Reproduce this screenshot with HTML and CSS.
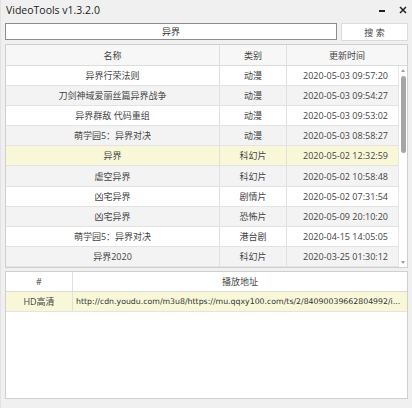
FILE: index.html
```html
<!DOCTYPE html>
<html>
<head>
<meta charset="utf-8">
<link rel="stylesheet" href="styles.css">
</head>
<body>
<div class="window">
  <div class="titlebar">
    <span class="title">VideoTools v1.3.2.0</span>
    <div class="controls">
      <span class="min"></span>
      <svg class="close" width="8" height="8" viewBox="0 0 8 8"><path d="M1 1L7 7M7 1L1 7" stroke="#222" stroke-width="1.5"/></svg>
    </div>
  </div>
  <div class="content">
    <div class="search">
      <div class="input">异界</div>
      <div class="btn">搜 索</div>
    </div>
    <div class="grid top">
      <div class="head">
        <div class="c">名称</div>
        <div class="c">类别</div>
        <div class="c last">更新时间</div>
      </div>
      <div class="body">
        <div class="rows">
          <div class="row"><div class="c">异界行荣法则</div><div class="c">动漫</div><div class="c">2020-05-03 09:57:20</div></div>
          <div class="row alt"><div class="c">刀剑神域爱丽丝篇异界战争</div><div class="c">动漫</div><div class="c">2020-05-03 09:54:27</div></div>
          <div class="row"><div class="c">异界群敌 代码重组</div><div class="c">动漫</div><div class="c">2020-05-03 09:53:02</div></div>
          <div class="row alt"><div class="c">萌学园5：异界对决</div><div class="c">动漫</div><div class="c">2020-05-03 08:58:27</div></div>
          <div class="row sel"><div class="c">异界</div><div class="c">科幻片</div><div class="c">2020-05-02 12:32:59</div></div>
          <div class="row alt"><div class="c">虐空异界</div><div class="c">科幻片</div><div class="c">2020-05-02 10:58:48</div></div>
          <div class="row"><div class="c">凶宅异界</div><div class="c">剧情片</div><div class="c">2020-05-02 07:31:54</div></div>
          <div class="row alt"><div class="c">凶宅异界</div><div class="c">恐怖片</div><div class="c">2020-05-09 20:10:20</div></div>
          <div class="row"><div class="c">萌学园5：异界对决</div><div class="c">港台剧</div><div class="c">2020-04-15 14:05:05</div></div>
          <div class="row alt"><div class="c">异界2020</div><div class="c">科幻片</div><div class="c">2020-03-25 01:30:12</div></div>
        </div>
        <div class="vscroll">
          <span class="arrow up"></span>
          <div class="track"><div class="thumb"></div></div>
          <span class="arrow down"></span>
        </div>
      </div>
    </div>
    <div class="grid bottom">
      <div class="head2">
        <div class="c">#</div>
        <div class="c last">播放地址</div>
      </div>
      <div class="row2 sel">
        <div class="c">HD高清</div>
        <div class="c url">http://cdn.youdu.com/m3u8/https://mu.qqxy100.com/ts/2/84090039662804992/i...</div>
      </div>
    </div>
  </div>
</div>
</body>
</html>
```

FILE: styles.css
```css
* { box-sizing: border-box; }
html, body { margin: 0; padding: 0; }
body {
  width: 412px;
  height: 408px;
  background: #f0f0f0;
  font-family: "Open Sans", "Noto Sans CJK SC", sans-serif;
  font-size: 9px;
  color: #444;
  overflow: hidden;
}
.window {
  height: 408px;
  display: flex;
  flex-direction: column;
  border-left: 1px solid #e2e2e2;
}
.titlebar {
  height: 22px;
  display: flex;
  align-items: center;
  justify-content: space-between;
  padding: 0 5px 2px 5px;
}
.title { font-size: 10.5px; color: #222; }
.controls { display: flex; align-items: center; gap: 14px; }
.min { width: 6px; height: 2px; background: #222; margin-top: 2px; }
.close { display: block; }
.content {
  flex: 1;
  display: flex;
  flex-direction: column;
  padding: 1px 4px 9px 4px;
  gap: 3px;
}
.search { display: flex; gap: 4px; height: 18px; align-items: flex-start; }
.input {
  flex: 1;
  height: 17px;
  background: #fff;
  border: 1px solid #8c8c8c;
  display: flex;
  align-items: center;
  justify-content: center;
  color: #333;
}
.btn {
  width: 67px;
  height: 18px;
  background: #fff;
  border: 1px solid #dcdcdc;
  display: flex;
  align-items: center;
  justify-content: center;
}
.grid {
  background: #fff;
  border: 1px solid #cfcfcf;
  display: flex;
  flex-direction: column;
}
.grid.top { height: 224px; }
.grid.bottom { flex: 1; }
.head, .row {
  display: grid;
  grid-template-columns: 214px 67px 1fr;
}
.head {
  height: 21px;
  background: #f7f7f7;
  border-bottom: 1px solid #dcdcdc;
}
.c {
  display: flex;
  align-items: center;
  justify-content: center;
  border-right: 1px solid #e0e0e0;
  white-space: nowrap;
  overflow: hidden;
}
.c.last { border-right: none; }
.body { flex: 1; display: flex; }
.rows { flex: 1; display: flex; flex-direction: column; border-right: 1px solid #e6e6e6; }
.row {
  height: 20.1px;
  border-bottom: 1px solid #e3e3e3;
  background: #fff;
}
.row .c:last-child { border-right: none; padding-left: 6px; }
.row.alt { background: #f3f3f3; }
.sel, .row.sel { background: #f8f8d9; }
.vscroll {
  width: 8px;
  display: flex;
  flex-direction: column;
  align-items: center;
  padding: 3px 0 3px 0;
}
.arrow {
  width: 0; height: 0;
  border-left: 2.5px solid transparent;
  border-right: 2.5px solid transparent;
}
.arrow.up { border-bottom: 3px solid #a0a0a0; }
.arrow.down { border-top: 3px solid #a0a0a0; }
.track { flex: 1; width: 100%; display: flex; justify-content: center; padding-top: 4px; }
.thumb { width: 5px; height: 77px; background: #a6a6a6; border-radius: 3px; }
.head2, .row2 {
  display: grid;
  grid-template-columns: 67px 1fr;
}
.head2 {
  height: 20px;
  border-bottom: 1px solid #dcdcdc;
  background: #fff;
}
.row2 { height: 20px; border-bottom: 1px solid #e3e3e3; }
.c.url {
  justify-content: flex-start;
  padding-left: 3px;
  border-right: none;
  font-family: "DejaVu Sans", sans-serif;
  font-size: 7.8px;
  color: #333;
}
```
